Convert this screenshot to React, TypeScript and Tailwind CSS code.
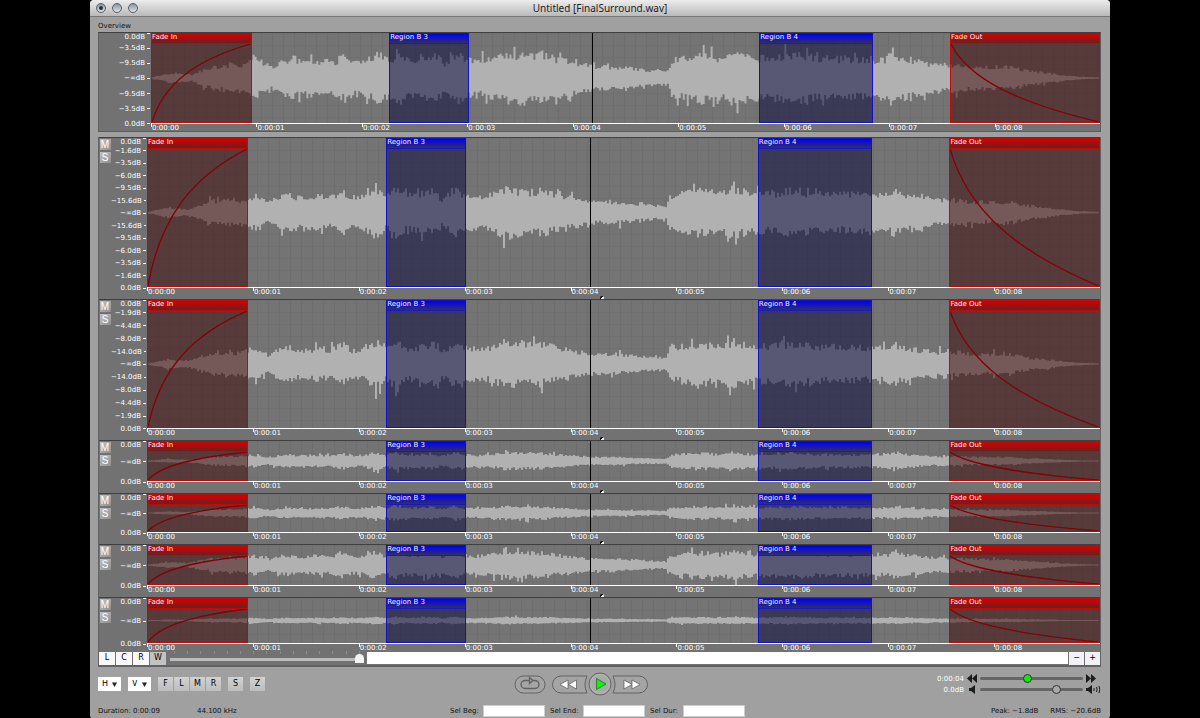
import { clsx } from "clsx";

type Region = {
  name: string;
  left: string;
  width: string;
  tone: "red" | "blue";
  fade?: "in" | "out";
};

const REGIONS: Region[] = [
  { name: "Fade In", left: "0%", width: "10.6%", tone: "red", fade: "in" },
  { name: "Region B 3", left: "25.1%", width: "8.4%", tone: "blue" },
  { name: "Region B 4", left: "64.1%", width: "12%", tone: "blue" },
  { name: "Fade Out", left: "84.2%", width: "15.8%", tone: "red", fade: "out" },
];

const SECONDS = [0, 1, 2, 3, 4, 5, 6, 7, 8];

const mirror = (marks: string[]) => [...marks, "−∞dB", ...[...marks].reverse()];

const TRACKS = [
  { id: 1, height: "h-[150px]", axis: "h-3", amp: 14, px: 150, marks: mirror(["0.0dB", "−1.6dB", "−3.5dB", "−6.0dB", "−9.5dB", "−15.6dB"]) },
  { id: 2, height: "h-[129px]", axis: "h-3", amp: 13, px: 129, marks: mirror(["0.0dB", "−1.9dB", "−4.4dB", "−8.0dB", "−14.0dB"]) },
  { id: 3, height: "h-[41px]", axis: "h-3", amp: 5, px: 41, marks: mirror(["0.0dB"]) },
  { id: 4, height: "h-[39px]", axis: "h-3", amp: 4, px: 39, marks: mirror(["0.0dB"]) },
  { id: 5, height: "h-[41px]", axis: "h-3", amp: 8, px: 41, marks: mirror(["0.0dB"]) },
  { id: 6, height: "h-[46px]", axis: "h-[7px]", amp: 2, px: 46, marks: mirror(["0.0dB"]) },
];

// [position on the 953 unit timeline, relative loudness]
const ENVELOPE: [number, number][] = [
  [0, 0.04], [10, 0.15], [20, 0.3], [32, 0.22], [40, 0.18], [50, 0.45], [62, 0.7],
  [80, 0.8], [92, 0.8], [105, 1.1], [112, 0.95], [120, 0.65], [130, 0.95], [142, 1.15],
  [155, 0.95], [170, 1.1], [182, 0.95], [195, 1.4], [202, 1], [215, 1.05], [228, 1.6],
  [238, 1.05], [248, 1.6], [258, 1.1], [270, 1.2], [285, 1.4], [294, 0.9], [306, 1.5],
  [316, 1.15], [330, 1.05], [345, 1.2], [358, 1.55], [375, 1.4], [395, 1.4], [412, 1.1],
  [430, 0.9], [444, 0.7], [470, 0.68], [495, 0.5], [519, 0.4], [521, 1.05], [535, 1.3],
  [555, 1.45], [572, 1.2], [586, 1.65], [600, 1.3], [620, 1.25], [645, 1.45], [668, 1.25],
  [700, 1.2], [735, 1.15], [746, 1.4], [762, 1.15], [785, 0.85], [805, 0.8], [822, 0.72],
  [840, 0.65], [860, 0.7], [880, 0.42], [900, 0.3], [918, 0.14], [932, 0.06], [953, 0.02],
];

function loudness(x: number) {
  const i = Math.max(1, ENVELOPE.findIndex((p) => p[0] >= x));
  const [x0, a] = ENVELOPE[i - 1];
  const [x1, b] = ENVELOPE[i];
  return a + ((b - a) * (x - x0)) / (x1 - x0);
}

function wavePath(height: number, amp: number, seed: number) {
  let state = seed * 7919;
  const random = () => {
    state = (state * 1103515245 + 12345) % 2147483648;
    return state / 2147483648;
  };
  const mid = height / 2;
  const size = () => 0.8 + random() * 0.45 + (random() > 0.88 ? random() * 0.5 : 0);
  let top = "";
  let bottom = "";
  for (let x = 0; x < 953; x += 2) {
    const a = loudness(x) * amp;
    const up = (mid - a * size() - 0.3).toFixed(1);
    const down = (mid + a * size() + 0.3).toFixed(1);
    top += `L${x} ${up}H${x + 2}`;
    bottom = `L${x + 2} ${down}H${x}` + bottom;
  }
  return `M0 ${mid}${top}${bottom}Z`;
}

function RegionBox({ region }: { region: Region }) {
  const red = region.tone === "red";
  return (
    <div
      className={clsx(
        "absolute inset-y-0 flex flex-col border",
        red ? "border-[#c40808] bg-[#390000]/50" : "border-[#1010c8] bg-[#000039]/50",
      )}
      style={{ left: region.left, width: region.width }}
    >
      <div
        className={clsx(
          "h-[10px] shrink-0 overflow-hidden whitespace-nowrap border-b text-[7px] leading-[7px] text-[#fbeef0]",
          red
            ? "border-[#c40808] bg-linear-to-b/srgb from-[#d40000] to-[#6a2020]"
            : "border-[#1818c8] bg-linear-to-b/srgb from-[#0000f8] to-[#303060]",
        )}
      >
        {region.name}
      </div>
      {region.fade && (
        <svg className="min-h-0 w-full flex-1" viewBox="0 0 100 100" preserveAspectRatio="none">
          <path
            d={region.fade === "in" ? "M0 100C12 50 45 20 100 0" : "M0 0C12 45 45 75 100 100"}
            fill="none"
            stroke="#850008"
            strokeWidth="1.3"
            vectorEffect="non-scaling-stroke"
          />
        </svg>
      )}
    </div>
  );
}

function Scale({ marks, className }: { marks: string[]; className: string }) {
  return (
    <div className={clsx("flex flex-col justify-between text-[7px] leading-2 text-white", className)}>
      {marks.map((mark, i) => (
        <div key={i} className={clsx("flex h-0 justify-end gap-[2px]", i === 0 ? "items-start" : "items-center")}>
          <span>{mark}</span>
          <span className="h-px w-[3px] bg-white" />
        </div>
      ))}
    </div>
  );
}

function Plot({ height, px, amp, seed }: { height: string; px: number; amp: number; seed: number }) {
  return (
    <div
      className={clsx(
        "relative border-b border-white bg-[#747474] bg-[linear-gradient(90deg,#6e6e6e_1px,transparent_1px),linear-gradient(#707070_1px,transparent_1px)] bg-size-[11px_12px]",
        height,
      )}
    >
      <svg className="block size-full" viewBox={`0 0 953 ${px}`} preserveAspectRatio="none">
        <path d={wavePath(px, amp, seed)} fill="#b1b1b1" />
      </svg>
      {REGIONS.map((region) => (
        <RegionBox key={region.name} region={region} />
      ))}
      <div className="absolute inset-y-0 left-[46.5%] w-px bg-black" />
    </div>
  );
}

function TimeAxis({ className }: { className: string }) {
  return (
    <div className={clsx("grid grid-cols-9 text-[7px] leading-2 text-white", className)}>
      {SECONDS.map((s) => (
        <div key={s} className="flex items-start">
          <span className="h-[3px] w-px bg-white" />
          <span>0:00:0{s}</span>
        </div>
      ))}
    </div>
  );
}

const SQUARE = "flex items-center justify-center";
const GREY_BUTTON = "h-[14px] w-[15px] bg-linear-to-b from-[#d2d2d2] to-[#bdbdbd] text-[8px] leading-none text-black flex items-center justify-center";

function Track({ track }: { track: (typeof TRACKS)[number] }) {
  return (
    <section className="relative -mt-px flex border-t border-[#404040] first:mt-0">
      <div className="flex w-3 flex-col items-center gap-[2px] pt-px">
        {["M", "S"].map((label) => (
          <button
            key={label}
            aria-label={`${label === "M" ? "Mute" : "Solo"} track ${track.id}`}
            className={clsx(SQUARE, "h-[11px] w-[11px] bg-linear-to-br from-[#c4c4c4] to-[#8e8e8e] font-['Liberation_Sans',sans-serif] text-[10px] leading-none text-white")}
          >
            {label}
          </button>
        ))}
      </div>
      <Scale marks={track.marks} className={clsx("w-9 pr-px", track.height)} />
      <div className="min-w-0 flex-1">
        <Plot height={track.height} px={track.px} amp={track.amp} seed={track.id + 3} />
        <TimeAxis className={track.axis} />
      </div>
      {track.id < 6 && (
        <div className="absolute bottom-0 left-1/2 size-1 rounded-full bg-linear-to-br from-black from-50% to-white to-50%" />
      )}
    </section>
  );
}

function Menu({ label, name }: { label: string; name: string }) {
  return (
    <div className="relative flex h-[14px] w-[23px] items-center bg-white">
      <select aria-label={name} className="size-full appearance-none pl-1 text-[8px] leading-none text-black">
        <option>{label}</option>
      </select>
      <svg className="pointer-events-none absolute right-1 size-[5px]" viewBox="0 0 6 6">
        <path d="M0 0.5h6L3 6z" fill="#222" />
      </svg>
    </div>
  );
}

const THUMB =
  "h-2 appearance-none bg-transparent [&::-webkit-slider-runnable-track]:h-[3px] [&::-webkit-slider-runnable-track]:rounded-full [&::-webkit-slider-runnable-track]:bg-[#666] [&::-webkit-slider-thumb]:-mt-[3px] [&::-webkit-slider-thumb]:size-[9px] [&::-webkit-slider-thumb]:appearance-none [&::-webkit-slider-thumb]:rounded-full [&::-webkit-slider-thumb]:border [&::-webkit-slider-thumb]:border-[#333]";

function Arrows({ flip }: { flip?: boolean }) {
  return (
    <svg className={clsx("h-[9px] w-[10px]", flip && "rotate-180")} viewBox="0 0 10 9">
      <path d="M0 4.5 5 0v9zM5 4.5 10 0v9z" fill="#1c1c1c" />
    </svg>
  );
}

function Transport() {
  return (
    <div className="flex items-center">
      <button aria-label="Rewind" className="h-[19px] w-[37px]">
        <svg viewBox="0 0 37 19" className="block size-full">
          <path d="M36 1H10a8.500 8.500 0 0 0 0 17h26q-4-8.500 0-17z" fill="#a4a4a4" stroke="#626262" />
          <path d="M9 9.500 17 5v9zM17.500 9.500 25.500 5v9z" fill="#fff" stroke="#555" strokeWidth=".7" />
        </svg>
      </button>
      <button aria-label="Play" className="size-6">
        <svg viewBox="0 0 24 24" className="block size-full">
          <circle cx="12" cy="12" r="11" fill="#aaa" stroke="#626262" />
          <circle cx="12" cy="12" r="9.500" fill="none" stroke="#b8b8b8" />
          <path d="M8.500 6.500 18 12l-9.500 5.500z" fill="#0bf50b" stroke="#1c6c1c" strokeWidth=".8" />
        </svg>
      </button>
      <button aria-label="Fast forward" className="h-[19px] w-[37px]">
        <svg viewBox="0 0 37 19" className="block size-full">
          <path d="M1 1h26a8.500 8.500 0 0 1 0 17H1q4-8.500 0-17z" fill="#a4a4a4" stroke="#626262" />
          <path d="M12 5v9l8-4.500zM20 5v9l8-4.500z" fill="#fff" stroke="#555" strokeWidth=".7" />
        </svg>
      </button>
    </div>
  );
}

export default function App() {
  return (
    <div className="min-h-screen bg-black font-['DejaVu_Sans',sans-serif]">
      <main className="mx-auto w-[85%] rounded-[4px] bg-[#a0a0a0] text-[7px] leading-2 text-[#111]">
        <header className="grid h-[17px] grid-cols-[1fr_auto_1fr] items-center rounded-t-[4px] border-b border-[#777] bg-linear-to-b from-[#ededed] to-[#b9b9b9] px-[6px]">
          <div className="flex gap-[6px]">
            {["Close", "Minimize", "Zoom"].map((label) => (
              <button
                key={label}
                aria-label={label}
                className={clsx(SQUARE, "size-[10px] rounded-full border border-[#56606c] bg-linear-to-b from-[#8a94a0] to-[#dde3ea]")}
              >
                {label === "Close" && <span className="size-1 rounded-full bg-[#26303c]" />}
              </button>
            ))}
          </div>
          <h1 className="font-['Noto_Sans',sans-serif] text-[10px] leading-3 text-[#222]">Untitled [FinalSurround.wav]</h1>
        </header>

        <div className="pr-[9px] pl-2">
          <h2 className="h-[15px] pt-[5px]">Overview</h2>
          <section className="flex border border-t-[#404040] border-[#5c5c5c] bg-[#727272]">
            <Scale
              className="h-[91px] w-[52px] pr-px"
              marks={mirror(["0.0dB", "−3.5dB", "−9.5dB"])}
            />
            <div className="min-w-0 flex-1">
              <Plot height="h-[91px]" px={91} amp={15} seed={2} />
              <TimeAxis className="h-[7px]" />
            </div>
          </section>

          <div className="mt-[5px] border-x border-b-2 border-[#626262] bg-[#727272]">
            <div>
              {TRACKS.map((track) => (
                <Track key={track.id} track={track} />
              ))}
            </div>
            <div className="flex h-[14px] items-center">
              <div className="flex gap-px">
                {["L", "C", "R", "W"].map((label) => (
                  <button
                    key={label}
                    className={clsx(SQUARE, "h-[13px] w-4 text-[8px] leading-none text-black", label === "W" ? "bg-[#c2c2c2]" : "bg-[#f8f8f8]")}
                  >
                    {label}
                  </button>
                ))}
              </div>
              <div className="ml-1 flex h-full w-[194px] flex-col justify-between">
                <div className="flex justify-between px-1">
                  {Array.from({ length: 15 }, (_, i) => (
                    <span key={i} className="h-[3px] w-px bg-[#8c8c8c]" />
                  ))}
                </div>
                <input
                  type="range"
                  aria-label="Horizontal zoom"
                  defaultValue={100}
                  className="h-[11px] w-full appearance-none bg-transparent [&::-webkit-slider-runnable-track]:h-[3px] [&::-webkit-slider-runnable-track]:bg-[#bdbdbd] [&::-webkit-slider-thumb]:-mt-[4px] [&::-webkit-slider-thumb]:h-[9px] [&::-webkit-slider-thumb]:w-[9px] [&::-webkit-slider-thumb]:appearance-none [&::-webkit-slider-thumb]:rounded-t-full [&::-webkit-slider-thumb]:bg-[#f4f4f4]"
                />
              </div>
              <div className="ml-[3px] h-3 flex-1 bg-white" />
              <div className="ml-px flex gap-px">
                {["−", "+"].map((label) => (
                  <button key={label} className={clsx(SQUARE, "h-[13px] w-[15px] bg-[#f2f2f6] text-[8px] leading-none text-black")}>
                    {label}
                  </button>
                ))}
              </div>
            </div>
          </div>

          <div className="grid h-[34px] grid-cols-[1fr_auto_1fr] items-center">
            <div className="flex items-center justify-between pr-[5px]">
              <div className="flex items-center gap-[7px]">
                <Menu label="H" name="Horizontal zoom presets" />
                <Menu label="V" name="Vertical zoom presets" />
                <div className="flex gap-px">
                  {["F", "L", "M", "R"].map((label) => (
                    <button key={label} className={GREY_BUTTON}>{label}</button>
                  ))}
                </div>
                <button className={GREY_BUTTON}>S</button>
                <button className={GREY_BUTTON}>Z</button>
              </div>
              <button aria-label="Loop" className="h-[19px] w-8">
                <svg viewBox="0 0 32 19" className="block size-full">
                  <rect x="1" y="1" width="30" height="17" rx="8.500" fill="#a4a4a4" stroke="#626262" />
                  <path d="M15 5.500h-4a4 4 0 0 0 0 8h10a4 4 0 0 0 0-8h-2.500M15.500 2.500v6L19 5.500z" fill="none" stroke="#626262" strokeWidth="1.400" />
                </svg>
              </button>
            </div>
            <Transport />
            <div className="flex flex-col items-end gap-[2px]">
              <label className="flex items-center gap-[3px] text-white">
                0:00:04
                <Arrows />
                <input type="range" aria-label="Position" defaultValue={46} className={clsx(THUMB, "w-[103px] [&::-webkit-slider-thumb]:bg-[#10e810]")} />
                <span className="w-[15px]"><Arrows flip /></span>
              </label>
              <label className="flex items-center gap-[3px] text-white">
                0.0dB
                <svg className="h-[9px] w-[10px]" viewBox="0 0 10 9">
                  <path d="M2 3h2l4-3v9L4 6H2z" fill="#1c1c1c" />
                </svg>
                <input type="range" aria-label="Volume" defaultValue={77} className={clsx(THUMB, "w-[103px] [&::-webkit-slider-thumb]:bg-[#a8a8a8]")} />
                <svg className="h-[9px] w-[15px]" viewBox="0 0 15 9">
                  <path d="M0 3h2l4-3v9L2 6H0z" fill="#1c1c1c" />
                  <path d="M8 3v3M10.500 2q1 2.500 0 5M13 1q1.500 3.500 0 7" fill="none" stroke="#1c1c1c" />
                </svg>
              </label>
            </div>
          </div>

          <footer className="grid h-[18px] grid-cols-[1fr_auto_1fr] items-center pt-[2px]">
            <div className="flex">
              <span className="w-[99px]">Duration: 0:00:09</span>
              <span>44.100 kHz</span>
            </div>
            <div className="flex items-center gap-[5px] pr-1">
              {["Sel Beg:", "Sel End:", "Sel Dur:"].map((label) => (
                <label key={label} className="flex items-center gap-1 whitespace-nowrap">
                  <span className="w-[29px]">{label}</span>
                  <input type="text" className="h-3 w-[62px] border border-[#ccc] bg-white" />
                </label>
              ))}
            </div>
            <div className="flex justify-end gap-3">
              <span>Peak: −1.8dB</span>
              <span>RMS: −20.6dB</span>
            </div>
          </footer>
        </div>
      </main>
    </div>
  );
}
